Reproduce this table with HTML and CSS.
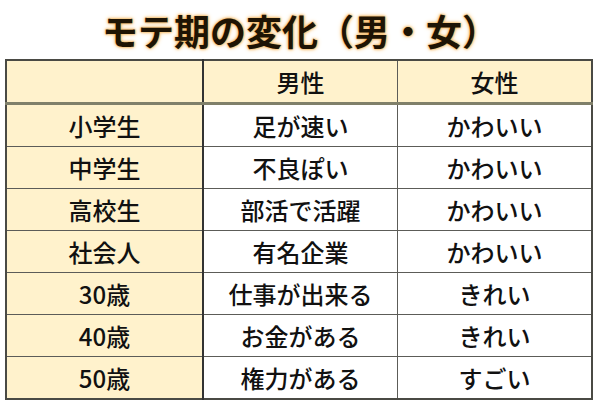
FILE: index.html
```html
<!DOCTYPE html>
<html lang="ja">
<head>
<meta charset="utf-8">
<link rel="stylesheet" href="styles.css">
</head>
<body>
<div class="page">
  <h1 class="title">モテ期の変化（男・女）</h1>
  <table class="grid">
    <thead>
      <tr><th class="label"></th><th>男性</th><th>女性</th></tr>
    </thead>
    <tbody>
      <tr><td class="label">小学生</td><td>足が速い</td><td>かわいい</td></tr>
      <tr><td class="label">中学生</td><td>不良ぽい</td><td>かわいい</td></tr>
      <tr><td class="label">高校生</td><td>部活で活躍</td><td>かわいい</td></tr>
      <tr><td class="label">社会人</td><td>有名企業</td><td>かわいい</td></tr>
      <tr><td class="label">30歳</td><td>仕事が出来る</td><td>きれい</td></tr>
      <tr><td class="label">40歳</td><td>お金がある</td><td>きれい</td></tr>
      <tr><td class="label">50歳</td><td>権力がある</td><td>すごい</td></tr>
    </tbody>
  </table>
</div>
</body>
</html>
```
FILE: styles.css
```css
html, body {
  margin: 0;
  padding: 0;
  background: #ffffff;
}
.page {
  width: 600px;
  height: 404px;
  font-family: "Noto Sans CJK JP", "Noto Sans", sans-serif;
  color: #111;
  padding-top: 6px;
  box-sizing: border-box;
}
.title {
  margin: 0;
  height: 53px;
  line-height: 48px;
  text-align: center;
  font-size: 36px;
  font-weight: 700;
  color: #1e1404;
  text-shadow: 0 0 2px #f3b55e, 0 0 3px #f3b55e, 0 0 5px #f8cf90;
}
.grid {
  margin-left: 5px;
  width: 588px;
  border-collapse: collapse;
  table-layout: fixed;
  border: 2px solid #4a4a44;
}
.grid th, .grid td {
  height: 41px;
  padding: 0;
  text-align: center;
  vertical-align: middle;
  font-size: 24px;
  font-weight: 500;
  border: 1.5px solid #5c5c58;
  line-height: 1;
}
.grid th {
  height: 41px;
  background: #fff2cc;
  border-bottom: 3px solid #80806a;
}
.grid th:first-child, .grid td:first-child { width: 195px; border-right: 2px solid #333; }
.grid td.label { background: #fff2cc; }
.grid td { background: #fff; }
```
